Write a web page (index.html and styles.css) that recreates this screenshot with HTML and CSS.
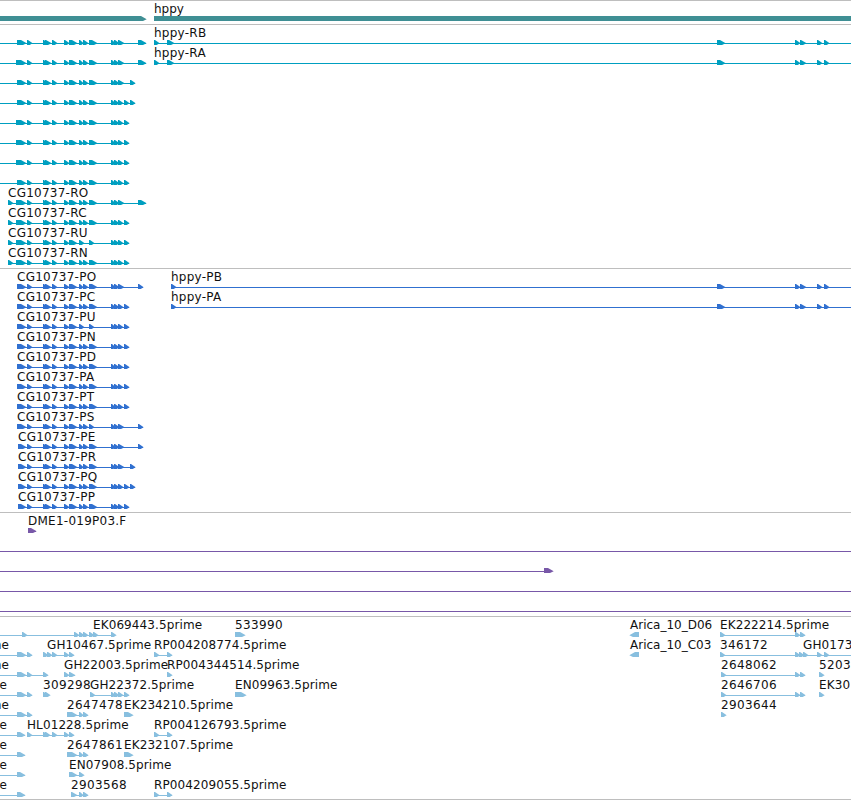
FILE: index.html
```
<!DOCTYPE html>
<html lang="en">
<head>
    <meta charset="UTF-8">
    <title>Genome Browser - hppy</title>
    <link rel="stylesheet" href="styles.css">
</head>
<body>
    <main class="browser">
        <section class="track gene" id="genes"></section>
        <section class="track transcript" id="transcripts"></section>
        <section class="track protein" id="proteins"></section>
        <section class="track insertion" id="insertions"></section>
        <section class="track est" id="ests"></section>
    </main>
    <script src="script.js"></script>
</body>
</html>
```
FILE: styles.css
```
* {
    margin: 0;
    padding: 0;
    box-sizing: border-box;
}

body {
    background-color: #fff;
    width: 851px;
    height: 800px;
    overflow: hidden;
}

.browser {
    display: flex;
    flex-direction: column;
    height: 800px;
    border-bottom: 1px solid #bebebe;
}

.track {
    border-top: 1px solid #bebebe;
    padding-bottom: 3px;
}

.row {
    display: block;
    width: 851px;
    height: 20px;
    overflow: hidden;
}

.row text {
    font-family: "DejaVu Sans", sans-serif;
    font-size: 12px;
    fill: #111;
}

.gene {
    color: #3f8f94;
}

.transcript {
    color: #009fc0;
}

.protein {
    color: #3070d0;
}

.insertion {
    color: #7858a8;
}

.est {
    color: #88bfdf;
    padding-bottom: 0;
}

.transcript text,
.protein text,
.insertion text {
    letter-spacing: 0.25px;
}

.est text {
    letter-spacing: 0.1px;
}

.est .digits {
    letter-spacing: 0.38px;
}

.est .clone {
    letter-spacing: 0;
}

.row path,
.row rect {
    fill: currentColor;
}
```
FILE: script.js
```
const WIDTH = 851;

// a feature is [label, label x, line start, line end, 'start-end ...']
const mid = '27-32 43-47 45-51 52-57 64-69 69-77 79-83 83-88 ';
const exons = '27-32 43-47 45-51 52-57 64-69 69-77 79-83 83-88 89-97 ';
const shortExons = '27-32 43-47 45-51 52-57 64-69 69-77 79-84 89-94 ';
const tail = '111-115 114-119 118-124 ';
const tail4 = '111-115 114-119 118-123 124-129';
const hppyExons = ' 717-725 795-800 800-806 817-822 824-829';

const tracks = {
    genes: [
        [['', 0, 0, 0, '-9-146'], ['hppy', 154, 154, WIDTH, '154-870']]
    ],
    transcripts: [
        [['', 0, 0, 146, '17-26 ' + exons + tail + '138-146'], ['hppy-RB', 154, 154, WIDTH, '154-159 167-174' + hppyExons]],
        [['', 0, 0, 146, '16-26 ' + exons + tail + '138-146'], ['hppy-RA', 154, 154, WIDTH, '154-159 167-174' + hppyExons]],
        [['', 0, 0, 135, '17-26 ' + exons + tail + '130-135']],
        [['', 0, 0, 135, '17-26 ' + exons + tail4 + ' 130-135']],
        [['', 0, 0, 129, '16-26 ' + exons + tail4]],
        [['', 0, 0, 129, '16-26 ' + exons + tail4]],
        [['', 0, 0, 129, '16-26 ' + exons + tail4]],
        [['', 0, 0, 129, '17-26 ' + exons + tail4]],
        [['CG10737-RO', 8, 8, 146, '8-13 16-26 ' + exons + tail + '138-146']],
        [['CG10737-RC', 8, 8, 129, '8-13 16-26 ' + exons + tail4]],
        [['CG10737-RU', 8, 8, 129, '8-13 16-26 ' + shortExons + tail4]],
        [['CG10737-RN', 8, 8, 129, '8-13 16-26 ' + exons + tail4]]
    ],
    proteins: [
        [['CG10737-PO', 17, 17, 143, '17-26 ' + exons + tail + '138-143'], ['hppy-PB', 171, 171, WIDTH, '171-176' + hppyExons]],
        [['CG10737-PC', 17, 17, 129, '17-26 ' + exons + tail4], ['hppy-PA', 171, 171, WIDTH, '171-176' + hppyExons]],
        [['CG10737-PU', 17, 17, 129, '17-26 ' + shortExons + tail4]],
        [['CG10737-PN', 17, 17, 129, '17-26 ' + exons + tail4]],
        [['CG10737-PD', 17, 17, 129, '17-26 ' + exons + tail4]],
        [['CG10737-PA', 17, 17, 129, '17-26 ' + exons + tail4]],
        [['CG10737-PT', 17, 17, 129, '17-26 ' + exons + tail4]],
        [['CG10737-PS', 17, 17, 143, '17-26 ' + mid + '89-94 ' + tail + '138-143']],
        [['CG10737-PE', 18, 18, 143, '18-26 ' + exons + tail + '138-143']],
        [['CG10737-PR', 18, 18, 135, '18-26 ' + exons + tail + '130-135']],
        [['CG10737-PQ', 18, 18, 135, '18-26 ' + exons + tail4 + ' 130-135']],
        [['CG10737-PP', 18, 18, 129, '18-26 ' + exons + tail4]]
    ],
    insertions: [
        [['DME1-019P03.F', 28, 28, 36, '28-36']],
        [['', 0, 0, WIDTH, '']],
        [['', 0, 0, 550, '544-553']],
        [['', 0, 0, WIDTH, '']],
        [['', 0, 0, WIDTH, '']]
    ],
    ests: [
        [['EK069443.5prime', 93, 0, 115, '22-27 74-79 79-84 83-88 89-94 93-98 111-116'], ['533990', 235, 235, 240, '235-245'],
            ['Arica_10_D06', 630, 634, 639, '639-630'], ['EK222214.5prime', 720, 720, 805, '720-725 795-800 800-805']],
        [['me', 9, 0, 32, '17-26 27-32'], ['GH10467.5prime', 47, 43, 74, '43-48 47-52 52-57 64-69 69-74'],
            ['RP004208774.5prime', 154, 154, 172, '154-159 167-172'], ['Arica_10_C03', 630, 634, 639, '639-630'],
            ['346172', 720, 720, 809, '720-725 795-800 799-804 803-808'], ['GH0173', 803, 803, WIDTH, '817-822 824-829']],
        [['me', 9, 0, 48, '17-26 27-32 43-48'], ['GH22003.5prime', 64, 64, 75, '64-69 69-75'],
            ['RP004344514.5prime', 167, 167, 170, '167-172'], ['2648062', 721, 721, 805, '721-726 795-800 800-805'], ['5203', 819, 819, 822, '819-824']],
        [['me', 7, 0, 32, '17-26 27-32'], ['309298', 43, 43, 48, '43-47 45-50'], ['GH22372.5prime', 90, 90, 129, '90-95 ' + tail4],
            ['EN09963.5prime', 235, 235, 240, '235-246'], ['2646706', 721, 721, 805, '721-726 795-800 800-805'], ['EK30', 819, 819, 822, '819-824']],
        [['me', 9, 0, 32, '17-26 27-32'], ['2647478', 67, 67, 88, '67-77 79-83 83-88'], ['EK234210.5prime', 124, 124, 130, '124-133'],
            ['2903644', 721, 721, 724, '721-726']],
        [['me', 7, 0, 25, '17-25'], ['HL01228.5prime', 27, 27, 74, '27-32 43-48 45-50 52-57 64-69 69-74'],
            ['RP004126793.5prime', 154, 154, 172, '154-159 167-172']],
        [['me', 7, 0, 25, '17-25'], ['2647861', 67, 67, 88, '67-77 79-83 83-88'], ['EK232107.5prime', 124, 124, 130, '124-133']],
        [['me', 7, 0, 25, '17-25'], ['EN07908.5prime', 69, 69, 83, '69-77 79-84']],
        [['me', 7, 0, 25, '17-25'], ['2903568', 71, 71, 88, '71-77 79-83 83-88'], ['RP004209055.5prime', 154, 154, 172, '154-159 167-172']]
    ]
};

function arrow(span) {
    const [, a, b] = span.match(/^(-?\d+)-(\d+)$/).map(Number);
    const dir = b > a ? 1 : -1;
    const tip = b + dir * 0.7;
    const neck = b - dir * Math.min(5, Math.abs(b - a) - 1);
    return `<path d="M${a} 15H${neck}L${tip} 18.2L${neck} 21H${a}Z"/>`;
}

function label(text, x) {
    if (!text) return '';
    // names that begin left of the view are aligned on their right end
    const anchor = text === 'me' ? ' text-anchor="end"' : '';
    let cls = '';
    if (/^\d+$/.test(text)) cls = ' class="digits"';
    if (text.startsWith('Arica')) cls = ' class="clone"';
    return `<text x="${x}" y="12"${anchor}${cls}>${text}</text>`;
}

for (const id in tracks) {
    document.getElementById(id).innerHTML = tracks[id].map(row =>
        '<svg class="row" viewBox="0 0 851 20">' + row.map(([text, x, start, end, spans]) =>
            `<rect x="${start}" y="18" width="${end - start}" height="1"/>` +
            (spans ? spans.trim().split(/\s+/).map(arrow).join('') : '') +
            label(text, x)
        ).join('') + '</svg>'
    ).join('');
}
```
